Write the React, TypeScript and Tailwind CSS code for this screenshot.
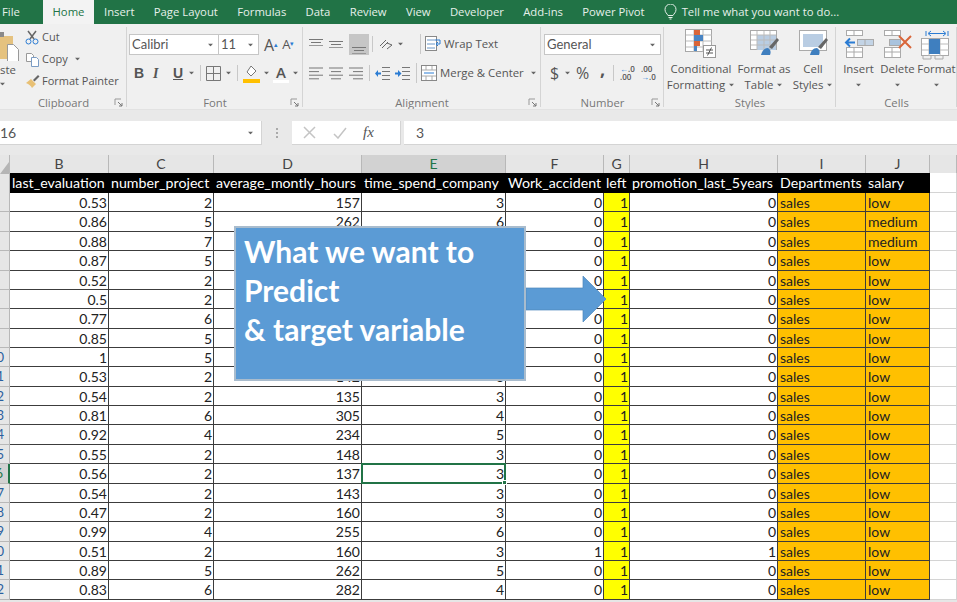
import React from "react";

const rows: [string, number, number, number, number, number, string][] = [
  ["0.53", 2, 157, 3, 0, 0, "low"],
  ["0.86", 5, 262, 6, 0, 0, "medium"],
  ["0.88", 7, 272, 4, 0, 0, "medium"],
  ["0.87", 5, 223, 5, 0, 0, "low"],
  ["0.52", 2, 159, 3, 0, 0, "low"],
  ["0.5", 2, 153, 3, 0, 0, "low"],
  ["0.77", 6, 247, 4, 0, 0, "low"],
  ["0.85", 5, 259, 5, 0, 0, "low"],
  ["1", 5, 224, 5, 0, 0, "low"],
  ["0.53", 2, 142, 3, 0, 0, "low"],
  ["0.54", 2, 135, 3, 0, 0, "low"],
  ["0.81", 6, 305, 4, 0, 0, "low"],
  ["0.92", 4, 234, 5, 0, 0, "low"],
  ["0.55", 2, 148, 3, 0, 0, "low"],
  ["0.56", 2, 137, 3, 0, 0, "low"],
  ["0.54", 2, 143, 3, 0, 0, "low"],
  ["0.47", 2, 160, 3, 0, 0, "low"],
  ["0.99", 4, 255, 6, 0, 0, "low"],
  ["0.51", 2, 160, 3, 1, 1, "low"],
  ["0.89", 5, 262, 5, 0, 0, "low"],
  ["0.83", 6, 282, 4, 0, 0, "low"],
];

const colLetters = ["B", "C", "D", "E", "F", "G", "H", "I", "J"];
const headers = [
  "last_evaluation",
  "number_project",
  "average_montly_hours",
  "time_spend_company",
  "Work_accident",
  "left",
  "promotion_last_5years",
  "Departments",
  "salary",
];
const tabs = ["Insert", "Page Layout", "Formulas", "Data", "Review", "View", "Developer", "Add-ins", "Power Pivot"];

const Caret = ({ className = "" }: { className?: string }) => (
  <svg width="7" height="4" viewBox="0 0 7 4" className={`shrink-0 ${className}`}>
    <path d="M0 0h7L3.5 4z" fill="#666" />
  </svg>
);

const Sep = ({ h = "h-[20px]" }: { h?: string }) => <div className={`w-px bg-[#c8c8c8] shrink-0 ${h}`} />;

const Launcher = () => (
  <svg width="9" height="9" viewBox="0 0 9 9" className="absolute right-[4px] bottom-[2px]">
    <path d="M1 7V1h6" fill="none" stroke="#999" />
    <path d="M4 4l4 4M5 8h3V5" fill="none" stroke="#777" />
  </svg>
);

const Group = ({
  width,
  label,
  launcher,
  children,
}: {
  width: string;
  label: string;
  launcher?: boolean;
  children: React.ReactNode;
}) => (
  <div className={`relative flex flex-col shrink-0 ${width}`}>
    <div className="h-[71px] shrink-0 flex flex-col overflow-hidden">{children}</div>
    <div className="text-center text-[11.3px] leading-[16px] text-[#777]">{label}</div>
    {launcher && <Launcher />}
    <div className="absolute right-0 top-[3px] bottom-[2px] w-px bg-[#d4d4d4]" />
  </div>
);

const Lines = ({ align }: { align: "l" | "c" | "r" }) => {
  const widths = [14, 10, 14, 10];
  return (
    <svg width="14" height="13" viewBox="0 0 14 13">
      {widths.map((w, i) => {
        const x = align === "l" ? 0 : align === "c" ? (14 - w) / 2 : 14 - w;
        return <rect key={i} x={x} y={i * 3.6 + 0.5} width={w} height="1" fill="#777" />;
      })}
    </svg>
  );
};

const VAlign = ({ y }: { y: number }) => (
  <svg width="14" height="10" viewBox="0 0 14 10">
    <rect x="0" y={y} width="14" height="1" fill="#777" />
    <rect x="2" y={y + 3} width="10" height="1" fill="#777" />
    <rect x="0" y={y + 6} width="14" height="1" fill="#999" />
  </svg>
);

const Indent = ({ flip }: { flip?: boolean }) => (
  <svg width="15" height="13" viewBox="0 0 15 13">
    <g fill="#777">
      <rect x="7" y="0" width="8" height="1" />
      <rect x="7" y="4" width="8" height="1" />
      <rect x="7" y="8" width="8" height="1" />
      <rect x="7" y="12" width="8" height="1" />
    </g>
    {flip ? (
      <path d="M0 5.500h3V3l3.500 3.500L3 10V7.500H0z" fill="#2b7cd3" />
    ) : (
      <path d="M6 5.500H3V3L0 6.500 3 10V7.500h3z" fill="#2b7cd3" />
    )}
  </svg>
);

const CondIcon = () => (
  <svg width="32" height="31" viewBox="0 0 32 31">
    <rect x="0.500" y="0.500" width="26" height="22" fill="#fff" stroke="#a8a8a8" />
    <path d="M9 1v22M18 1v22M1 6h26M1 12h26M1 18h26" stroke="#bbb" fill="none" />
    <rect x="9" y="1" width="6" height="5" fill="#d9663a" />
    <rect x="9" y="6" width="9" height="6" fill="#4a86c5" />
    <rect x="9" y="12" width="6" height="5" fill="#d9663a" />
    <rect x="9" y="17" width="3" height="5" fill="#4a86c5" />
    <rect x="18.500" y="16.500" width="12" height="12" fill="#fff" stroke="#999" />
    <path d="M21 21h7M21 24h7M26.500 18.500l-4 8" stroke="#555" fill="none" />
  </svg>
);

const TableIcon = () => (
  <svg width="31" height="31" viewBox="0 0 31 31">
    <rect x="1.500" y="1.500" width="26" height="19" fill="#fff" stroke="#aaa" />
    <rect x="8" y="6" width="19" height="15" fill="#b9cde3" />
    <path d="M8 2v19M15 2v19M21 2v19M2 6h25M2 11h25M2 16h25" stroke="#bbb" fill="none" />
    <path d="M20 18l8-9 2 2-7 9z" fill="#666" />
    <path d="M19 19c-4 0-6 3-7 7h9c1-3 1-5-2-7z" fill="#3f7fbf" />
  </svg>
);

const CellIcon = () => (
  <svg width="31" height="31" viewBox="0 0 31 31">
    <rect x="1.500" y="1.500" width="27" height="20" fill="#fff" stroke="#aaa" />
    <rect x="5" y="5" width="20" height="13" fill="#b9cde3" />
    <path d="M20 18l8-9 2 2-7 9z" fill="#666" />
    <path d="M19 19c-4 0-6 3-7 7h9c1-3 1-5-2-7z" fill="#3f7fbf" />
  </svg>
);

const InsertIcon = () => (
  <svg width="30" height="31" viewBox="0 0 30 31">
    <g fill="#fff" stroke="#aaa">
      <rect x="2.500" y="1.500" width="16" height="5" />
      <rect x="2.500" y="18.500" width="16" height="10" />
      <rect x="13.500" y="10.500" width="16" height="6" fill="#c3d4e6" />
    </g>
    <path d="M10 1v6M10 18v11M2 23h17M21 10v7" stroke="#aaa" fill="none" />
    <path d="M11 13.500H3M6 9.500l-4 4 4 4" stroke="#2b7cd3" strokeWidth="2" fill="none" />
  </svg>
);

const DeleteIcon = () => (
  <svg width="30" height="31" viewBox="0 0 30 31">
    <g fill="#fff" stroke="#aaa">
      <rect x="1.500" y="1.500" width="16" height="5" />
      <rect x="1.500" y="18.500" width="16" height="10" />
      <rect x="6.500" y="10.500" width="11" height="6" fill="#a9c3de" />
    </g>
    <path d="M9 1v6M9 18v11M1 23h17" stroke="#aaa" fill="none" />
    <path d="M16 7l12 12M28 7L16 19" stroke="#d9663a" strokeWidth="2" fill="none" />
  </svg>
);

const FormatIcon = () => (
  <svg width="32" height="31" viewBox="0 0 32 31">
    <path d="M5 2v5M27 2v5M8 4.500h16M10 2L7 4.500 10 7M22 2l3 2.500L22 7" stroke="#2b7cd3" fill="none" />
    <rect x="0.500" y="9.500" width="27" height="17" fill="#fff" stroke="#aaa" />
    <path d="M8 10v17M19 10v17M1 15h27M1 21h27" stroke="#bbb" fill="none" />
    <rect x="8" y="10" width="11" height="15" fill="#3f7fbf" />
    <path d="M2 27v3h8v-3M14 27v3h8v-3" stroke="#aaa" fill="none" />
  </svg>
);

const Large = ({
  width,
  icon,
  lines,
  caretBelow,
}: {
  width: string;
  icon: React.ReactNode;
  lines: string[];
  caretBelow?: boolean;
}) => (
  <div className={`flex flex-col items-center shrink-0 ${width}`}>
    <div className="h-[31px] mt-[5px] mb-[1px] flex items-center justify-center">{icon}</div>
    <div className="text-[11.4px] leading-[16px] whitespace-nowrap text-center">
      {lines.map((l, i) =>
        i === lines.length - 1 && !caretBelow ? (
          <div key={l} className="flex items-center justify-center gap-[3px]">
            {l}
            <Caret className="scale-75" />
          </div>
        ) : (
          <div key={l}>{l}</div>
        )
      )}
      {caretBelow && (
        <div className="h-[16px] flex items-center justify-center">
          <Caret className="scale-75" />
        </div>
      )}
    </div>
  </div>
);

const Ribbon = () => (
  <div className="h-[86px] bg-[#f0f0f0] flex text-[#555] overflow-hidden border-b border-[#e2e2e2]">
    {/* clipboard */}
    <Group width="w-[127px]" label="Clipboard" launcher>
      <div className="flex">
        <div className="w-[25px] shrink-0 flex flex-col">
          <svg width="19" height="32" viewBox="0 0 19 32" className="mt-[5px]">
            <rect x="-12" y="7" width="25" height="23" fill="#e5c27f" />
            <rect x="-6" y="3" width="10" height="5" fill="#8a8a8a" />
            <path d="M7.500 15.500h6l5 5v12h-11z" fill="#fff" stroke="#999" />
          </svg>
          <div className="text-[11.4px] leading-[16px] mt-[1px]">ste</div>
          <Caret className="mt-[4px] scale-75 -ml-[1px]" />
        </div>
        <div className="flex flex-col pt-[2px] text-[11px] text-[#555]">
          <div className="flex items-center h-[22px] pt-[1px]">
            <svg width="15" height="15" viewBox="0 0 15 15" className="mr-[2px]">
              <path d="M3 1l6 8M11 1L5 9" stroke="#666" strokeWidth="1.500" fill="none" />
              <circle cx="3.500" cy="11.500" r="2.500" fill="none" stroke="#2b7cd3" />
              <circle cx="10.500" cy="11.500" r="2.500" fill="none" stroke="#2b7cd3" />
            </svg>
            Cut
          </div>
          <div className="flex items-center h-[22px]">
            <svg width="15" height="15" viewBox="0 0 15 15" className="mr-[2px]">
              <path d="M1.500 1.500h5l2 2v6h-7z" fill="#fff" stroke="#999" />
              <path d="M6.500 5.500h5l2 2v7h-7z" fill="#fff" stroke="#7b9cc4" />
            </svg>
            Copy
            <Caret className="ml-[6px] scale-75" />
          </div>
          <div className="flex items-center h-[22px] whitespace-nowrap">
            <svg width="15" height="15" viewBox="0 0 15 15" className="mr-[2px]">
              <path d="M1 9l5-4 5 5-4 4c-1-2-3-4-6-5z" fill="#e8c074" />
              <path d="M8 6l5-5 1.500 1.500-5 5z" fill="#666" />
            </svg>
            Format Painter
          </div>
        </div>
      </div>
    </Group>

    {/* font */}
    <Group width="w-[176px]" label="Font" launcher>
      <div className="flex mt-[10px] pl-[2px]">
        <div className="w-[90px] h-[21px] bg-white border border-[#c6c6c6] flex items-center justify-between px-[2px] pr-[4px] text-[12px]">
          <span className="font-['Lato',sans-serif] text-[13px]">Calibri</span>
          <Caret className="scale-75" />
        </div>
        <div className="w-[40px] h-[21px] bg-white border border-l-0 border-[#c6c6c6] flex items-center justify-between pl-[2px] pr-[4px]">
          <span className="font-['Lato',sans-serif] text-[13px]">11</span>
          <Caret className="scale-75" />
        </div>
        <div className="flex items-center pl-[5px] gap-[4px]">
          <span className="text-[16px] leading-none">
            A<sup className="text-[#2b7cd3] text-[7px]">▴</sup>
          </span>
          <span className="text-[13px] leading-none">
            A<sup className="text-[#2b7cd3] text-[7px]">▾</sup>
          </span>
        </div>
      </div>
      <div className="flex items-center mt-[7px] h-[22px] pl-[7px]">
        <span className="w-[19px] text-[14px] font-bold font-['Liberation_Sans',sans-serif] text-[#555]">B</span>
        <span className="w-[20px] text-[14px] italic font-bold font-['Liberation_Serif',serif] text-[#555]">I</span>
        <span className="w-[15px] text-[14px] font-bold underline font-['Liberation_Sans',sans-serif]">U</span>
        <Caret className="scale-75" />
        <Sep h="h-[16px] ml-[5px]" />
        <svg width="15" height="15" viewBox="0 0 15 15" className="ml-[5px]">
          <path d="M.5.500h14v14H.500zM7.500 1v13M1 7.500h13" fill="none" stroke="#777" />
        </svg>
        <Caret className="ml-[4px] scale-75" />
        <Sep h="h-[16px] ml-[5px]" />
        <svg width="17" height="19" viewBox="0 0 17 19" className="ml-[5px]">
          <path d="M8 2l5 5-5 5-4-4z" fill="#fff" stroke="#777" />
          <rect x="0" y="15" width="17" height="4" fill="#ffc000" />
        </svg>
        <Caret className="ml-[3px] scale-75" />
        <div className="ml-[3px] w-[16px] text-center text-[15px] leading-[16px] border-b-[3px] border-white font-semibold">A</div>
        <Caret className="ml-[3px] scale-75" />
      </div>
    </Group>

    {/* alignment */}
    <Group width="w-[238px]" label="Alignment" launcher>
      <div className="flex items-center mt-[9px] h-[22px]">
        <div className="w-[20px] ml-[6px]">
          <VAlign y={0} />
        </div>
        <div className="w-[20px]">
          <VAlign y={2} />
        </div>
        <div className="w-[20px] h-[21px] bg-[#c6c6c6] flex items-end justify-center pb-[1px]">
          <VAlign y={3} />
        </div>
        <Sep h="h-[16px] ml-[3px]" />
        <svg width="15" height="13" viewBox="0 0 15 13" className="ml-[6px]">
          <path d="M1 8l6-6M3 10l6-6M8 11l5-4-5-2" stroke="#666" fill="none" />
        </svg>
        <Caret className="ml-[3px] scale-75" />
        <Sep h="h-[20px] ml-[16px]" />
        <svg width="17" height="16" viewBox="0 0 17 16" className="ml-[4px]">
          <rect x="0.500" y="0.500" width="11" height="14" fill="#fff" stroke="#888" />
          <path d="M2 4h8M2 8h8M2 12h8" stroke="#6b97c8" />
          <path d="M10 4h5v4h-4M13 6l-2 2 2 2" stroke="#2b7cd3" fill="none" />
        </svg>
        <span className="ml-[2px] text-[11.4px] whitespace-nowrap">Wrap Text</span>
      </div>
      <div className="flex items-center mt-[7px] h-[22px]">
        <div className="w-[20px] ml-[6px]">
          <Lines align="l" />
        </div>
        <div className="w-[20px]">
          <Lines align="c" />
        </div>
        <div className="w-[20px]">
          <Lines align="r" />
        </div>
        <Sep h="h-[16px]" />
        <div className="w-[20px] ml-[5px]">
          <Indent />
        </div>
        <div className="w-[16px]">
          <Indent flip />
        </div>
        <Sep h="h-[20px] ml-[5px]" />
        <svg width="17" height="16" viewBox="0 0 17 16" className="ml-[4px]">
          <rect x="0.500" y="0.500" width="15" height="15" fill="#fff" stroke="#888" />
          <path d="M1 5h14M1 11h14M5 1v4M11 1v4M5 11v4M11 11v4" stroke="#aaa" />
          <path d="M3 8h10" stroke="#2b7cd3" />
        </svg>
        <span className="ml-[2px] text-[11.4px] whitespace-nowrap">Merge &amp; Center</span>
        <Caret className="ml-[6px] scale-75" />
      </div>
    </Group>

    {/* number */}
    <Group width="w-[123px]" label="Number" launcher>
      <div className="mt-[10px] ml-[3px] w-[117px] h-[21px] bg-white border border-[#c6c6c6] flex items-center justify-between px-[2px] pr-[4px] font-['Lato',sans-serif] text-[13px]">
        General
        <Caret className="scale-75" />
      </div>
      <div className="flex items-center mt-[7px] h-[22px] pl-[9px]">
        <span className="text-[16px] w-[14px]">$</span>
        <Caret className="scale-75" />
        <span className="text-[16px] ml-[5px] w-[24px]">%</span>
        <span className="text-[18px] font-bold w-[12px] leading-none pb-[9px]">,</span>
        <Sep h="h-[16px] ml-[1px]" />
        <div className="ml-[6px] w-[21px] text-[8px] leading-[8px] font-semibold">
          <span className="text-[#2b7cd3]">←</span>.0
          <br />
          .00
        </div>
        <div className="w-[16px] text-[8px] leading-[8px] font-semibold">
          .00
          <br />
          <span className="text-[#2b7cd3]">→</span>.0
        </div>
      </div>
    </Group>

    {/* styles */}
    <Group width="w-[172px]" label="Styles">
      <div className="flex pl-[2px]">
        <Large width="w-[70px]" icon={<CondIcon />} lines={["Conditional", "Formatting"]} />
        <Large width="w-[56px]" icon={<TableIcon />} lines={["Format as", "Table"]} />
        <Large width="w-[42px]" icon={<CellIcon />} lines={["Cell", "Styles"]} />
      </div>
    </Group>

    {/* cells */}
    <Group width="w-[121px]" label="Cells">
      <div className="flex pl-[3px]">
        <Large width="w-[39px]" icon={<InsertIcon />} lines={["Insert"]} caretBelow />
        <Large width="w-[39px]" icon={<DeleteIcon />} lines={["Delete"]} caretBelow />
        <Large width="w-[39px]" icon={<FormatIcon />} lines={["Format"]} caretBelow />
      </div>
    </Group>
  </div>
);

const FormulaBar = () => (
  <div className="h-[45px] bg-[#e9e9e9] pt-[11px] pb-[10px] flex text-[#555]">
    <div className="w-[262px] h-[24px] bg-white border-r border-b border-[#d4d4d4] flex items-center justify-between pr-[7px] font-['Lato',sans-serif] text-[14px]">
      16
      <Caret className="scale-75" />
    </div>
    <div className="w-[30px] flex flex-col items-center justify-center gap-[2px]">
      <span className="w-[2px] h-[2px] bg-[#aaa]" />
      <span className="w-[2px] h-[2px] bg-[#aaa]" />
      <span className="w-[2px] h-[2px] bg-[#aaa]" />
    </div>
    <div className="w-[109px] h-[24px] bg-white border-r border-b border-[#d4d4d4] flex items-center">
      <svg width="13" height="13" viewBox="0 0 13 13" className="ml-[11px]">
        <path d="M1 1l11 11M12 1L1 12" stroke="#c4c4c4" strokeWidth="1.500" fill="none" />
      </svg>
      <svg width="14" height="12" viewBox="0 0 14 12" className="ml-[17px]">
        <path d="M1 7l4 4 8-10" stroke="#c4c4c4" strokeWidth="1.500" fill="none" />
      </svg>
      <span className="ml-[16px] italic font-['Liberation_Serif',serif] text-[15px] text-[#555]">fx</span>
    </div>
    <div className="ml-[3px] flex-1 h-[24px] bg-white border-b border-[#d4d4d4] flex items-center pl-[12px] font-['Lato',sans-serif] text-[14px]">
      3
    </div>
  </div>
);

const Sheet = () => (
  <div className="relative font-['Lato',sans-serif]">
    {/* column letters */}
    <div className="grid grid-cols-[10px_99px_105px_148px_144px_98px_26px_148px_88px_64px_27px] h-[18px] bg-[#e6e6e6] text-[#444] text-[14px] leading-[18px] text-center">
      <div className="border-r border-[#b8b8b8] overflow-hidden relative">
        <div className="absolute right-0 bottom-[1px] w-0 h-0 border-l-[9px] border-l-transparent border-b-[12px] border-b-[#b5b5b5]" />
      </div>
      {colLetters.map((c) => (
        <div
          key={c}
          className={
            c === "E"
              ? "bg-[#d2d2d2] text-[#217346] border-b-2 border-[#217346] border-r border-r-[#b8b8b8]"
              : "border-r border-[#b8b8b8]"
          }
        >
          {c}
        </div>
      ))}
      <div className="border-r border-[#b8b8b8]" />
    </div>

    {/* header row */}
    <div className="grid grid-cols-[10px_99px_105px_148px_144px_98px_26px_148px_88px_64px_27px] h-[20px] text-[14.2px] leading-[20px]">
      <div className="bg-[#e6e6e6] border-r border-[#b8b8b8]" />
      {headers.map((h) => (
        <div key={h} className="bg-black text-white whitespace-nowrap overflow-hidden pl-[2px]">
          {h}
        </div>
      ))}
      <div className="border-r border-b border-[#d4d4d4]" />
    </div>

    {/* data rows */}
    <div className="grid grid-rows-[19px_20px_19px_20px_19px_19px_20px_19px_19px_20px_19px_19px_20px_19px_20px_19px_19px_20px_19px_19px_20px] text-[#222] text-[14px] leading-[19px]">
      {rows.map((r, i) => {
        const num = i + 2;
        const selected = num === 16;
        const cell = "border-r border-b border-[#3c3c3c] text-right pr-[1px] overflow-hidden";
        return (
          <div
            key={i}
            className="min-h-0 grid grid-rows-[minmax(0,1fr)] grid-cols-[10px_99px_105px_148px_144px_98px_26px_148px_88px_64px_27px]"
          >
            <div
              className={`overflow-hidden flex justify-end border-r border-b border-[#b8b8b8] text-[13px] pr-[5px] ${
                selected ? "bg-[#d2d2d2] text-[#217346] border-r-2 border-r-[#217346]" : "bg-[#e6e6e6] text-[#2b5f9e]"
              }`}
            >
              {num >= 10 ? <span className="whitespace-nowrap">{num}</span> : null}
            </div>
            <div className={cell}>{r[0]}</div>
            <div className={cell}>{r[1]}</div>
            <div className={cell}>{r[2]}</div>
            <div className={selected ? "border-r border-b border-[#3c3c3c] text-right pr-[1px] relative" : cell}>
              {r[3]}
              {selected && (
                <>
                  <div className="absolute -inset-px border-2 border-[#217346]" />
                  <div className="absolute -right-[2px] -bottom-[2px] w-[5px] h-[5px] bg-[#217346] border border-white" />
                </>
              )}
            </div>
            <div className={cell}>{r[4]}</div>
            <div className={`${cell} bg-[#ffff00]`}>1</div>
            <div className={cell}>{r[5]}</div>
            <div className="border-r border-b border-[#3c3c3c] bg-[#ffc000] pl-[2px] overflow-hidden">sales</div>
            <div className="border-r border-b border-[#3c3c3c] bg-[#ffc000] pl-[2px] overflow-hidden">{r[6]}</div>
            <div className="border-r border-b border-[#d4d4d4]" />
          </div>
        );
      })}
    </div>

    {/* callout */}
    <div className="absolute left-[234px] top-[71px] w-[292px] h-[155px] bg-[#5b9bd5] border-2 border-[#a9bccd] pl-[8px] pt-[4px] text-white font-bold text-[30px] leading-[39px] whitespace-nowrap">
      What we want to
      <br />
      Predict
      <br />
      &amp; target variable
    </div>
    <svg width="82" height="48" viewBox="0 0 82 48" className="absolute left-[526px] top-[120px]">
      <path d="M0 13h57V1l23 23L57 47V35H0z" fill="#5b9bd5" stroke="#4f88bb" strokeWidth="0.700" />
    </svg>
  </div>
);

export default function App() {
  return (
    <div className="w-[957px] h-[602px] overflow-hidden bg-white font-['Open_Sans',sans-serif]">
      {/* tabs */}
      <div className="h-[24px] bg-[#217346] flex items-center text-[11.3px] text-[#e6f0ea] whitespace-nowrap">
        <span className="ml-[2px] w-[41px]">File</span>
        <div className="w-[51px] h-full bg-[#f3f3f3] text-[#217346] flex items-center justify-center">Home</div>
        <div className="flex items-center gap-[19.3px] ml-[10px]">
          {tabs.map((t) => (
            <span key={t}>{t}</span>
          ))}
        </div>
        <svg width="13" height="16" viewBox="0 0 13 16" className="ml-[19px]">
          <path d="M4 11.500C3 9.500 1 8.500 1 5.500a5.500 5.500 0 0 1 11 0c0 3-2 4-3 6z" fill="none" stroke="#e6f0ea" />
          <path d="M4.500 13.500h4M5.500 15h2" stroke="#e6f0ea" />
        </svg>
        <span className="ml-[5px]">Tell me what you want to do...</span>
      </div>
      <Ribbon />
      <FormulaBar />
      <Sheet />
      {/* sheet tab strip */}
      <div className="h-[2px] bg-[#e6e6e6] pl-[60px]">
        <div className="w-[110px] h-full bg-white" />
      </div>
    </div>
  );
}
